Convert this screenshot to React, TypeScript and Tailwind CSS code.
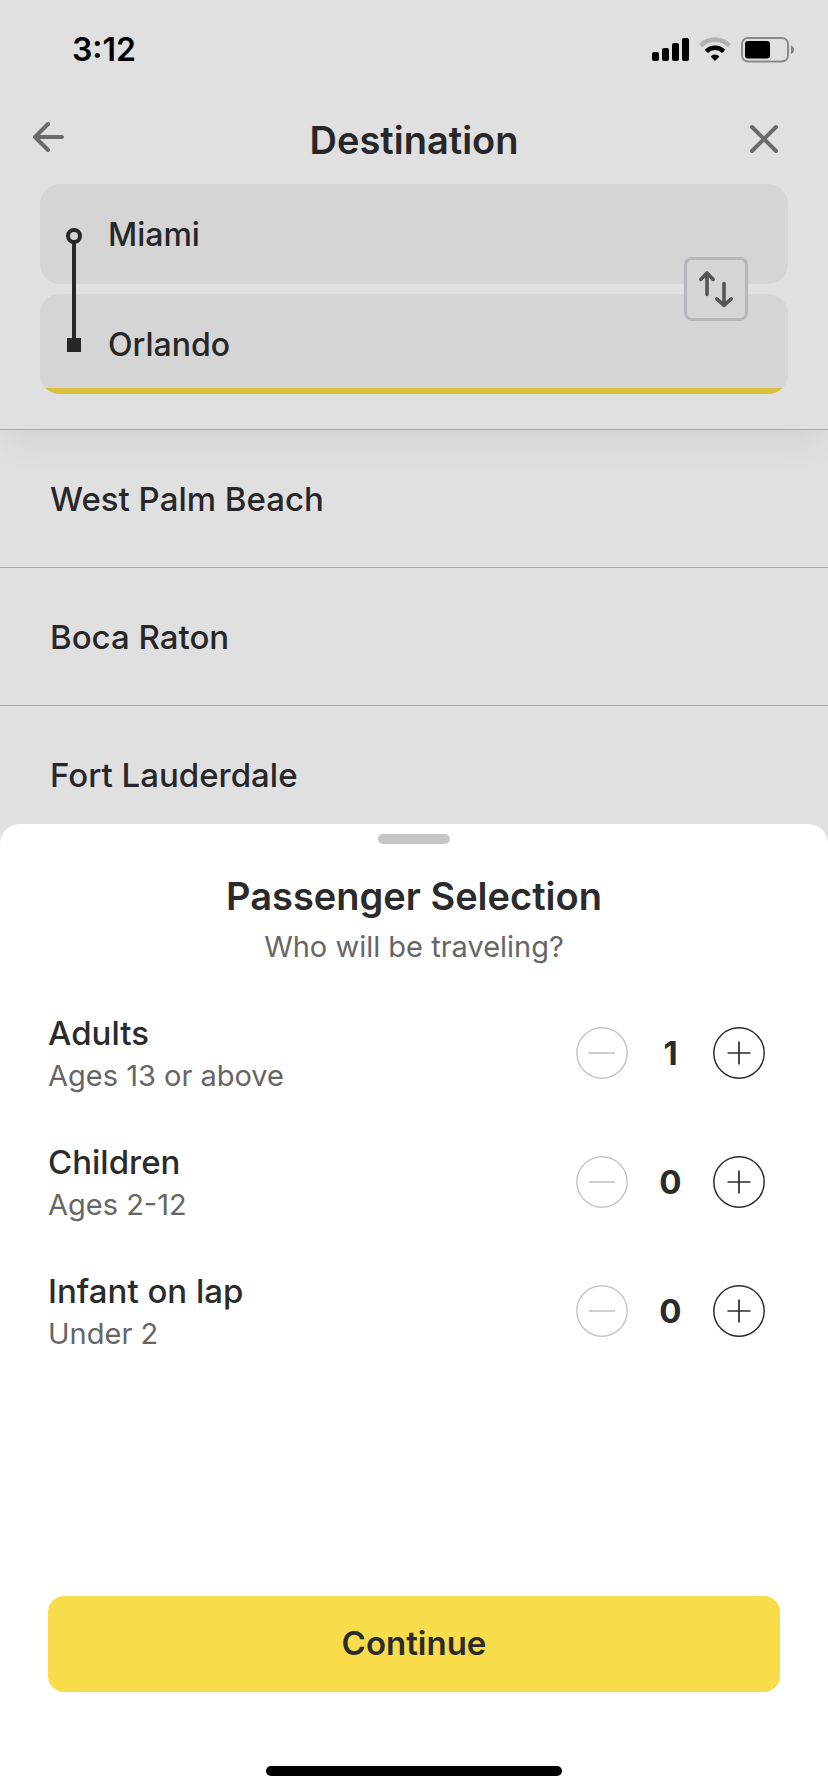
import { useState } from "react";

const CITIES = ["West Palm Beach", "Boca Raton", "Fort Lauderdale"];

const PASSENGER_TYPES = [
  { id: "adults", label: "Adults", hint: "Ages 13 or above", min: 1 },
  { id: "children", label: "Children", hint: "Ages 2-12", min: 0 },
  { id: "infants", label: "Infant on lap", hint: "Under 2", min: 0 },
];

function StatusBar() {
  return (
    <div className="flex h-[100px] items-center justify-between pr-[34px] pl-[72px] text-black">
      <span className="text-[32px] font-semibold">3:12</span>
      <div className="flex items-center gap-[10px]">
        <svg width="37" height="26" viewBox="0 0 37 26" aria-hidden="true">
          <rect x="0" y="15" width="7" height="9" rx="2" />
          <rect x="10" y="11" width="7" height="13" rx="2" />
          <rect x="20" y="6" width="7" height="18" rx="2" />
          <rect x="30" y="1" width="7" height="23" rx="2" />
        </svg>
        <svg width="32" height="26" viewBox="0 0 32 26" fill="none" aria-hidden="true">
          <path d="M1.6 8.6a20.4 20.4 0 0 1 28.8 0" stroke="#b3b3b3" strokeWidth="4.6" />
          <path d="M7.3 14.3a12.3 12.3 0 0 1 17.4 0" stroke="#000" strokeWidth="4.6" />
          <path d="M16 24l-4.4-4.6a6.2 6.2 0 0 1 8.8 0z" fill="#000" />
        </svg>
        <svg width="53" height="26" viewBox="0 0 53 26" fill="none" aria-hidden="true">
          <rect x="1" y="1" width="46" height="23.5" rx="6" stroke="#8a8a8a" strokeWidth="2" />
          <rect x="4" y="4" width="25" height="17.5" rx="3" fill="#000" />
          <path d="M50 8.5c4 1.4 4 7 0 8.4z" fill="#7d7d7d" />
        </svg>
      </div>
    </div>
  );
}

function RouteForm() {
  const [from, setFrom] = useState("Miami");
  const [to, setTo] = useState("Orlando");

  const swap = () => {
    setFrom(to);
    setTo(from);
  };

  return (
    <div className="relative mx-10 flex flex-col gap-[10px]">
      <input
        aria-label="From"
        className="h-[100px] w-full rounded-[20px] bg-[#d5d5d5] pr-32 pl-[68px] text-[32px] font-medium outline-none"
        value={from}
        onChange={(e) => setFrom(e.target.value)}
      />
      {/* Wrapper clips the active underline to the rounded corners */}
      <div className="overflow-hidden rounded-[20px] bg-[#d5d5d5]">
        <input
          aria-label="To"
          className="block h-[100px] w-full border-b-[6px] border-[#dac23f] pt-[6px] pr-32 pl-[68px] text-[32px] font-medium outline-none"
          value={to}
          onChange={(e) => setTo(e.target.value)}
        />
      </div>

      {/* Origin → destination marker */}
      <svg
        className="pointer-events-none absolute top-11 left-[26px]"
        width="16"
        height="124"
        viewBox="0 0 16 124"
        fill="none"
        aria-hidden="true"
      >
        <circle cx="8" cy="8" r="6" stroke="#272729" strokeWidth="4" />
        <path d="M8 14v97" stroke="#272729" strokeWidth="4" />
        <path d="M1 110h14v14H1z" fill="#272729" />
      </svg>

      <button
        type="button"
        aria-label="Swap cities"
        onClick={swap}
        className="absolute top-1/2 right-10 flex size-16 -translate-y-1/2 items-center justify-center rounded-lg border-[3px] border-[#b6b6bb] bg-[#d5d5d5]"
      >
        <svg
          width="58"
          height="58"
          viewBox="0 0 58 58"
          fill="none"
          stroke="#565658"
          strokeWidth="3.6"
          strokeLinecap="round"
          strokeLinejoin="round"
          aria-hidden="true"
        >
          <path d="M20 34.5V13M13.8 19.4L20 13l6.2 6.4" />
          <path d="M37 23.5V45.4M29.8 38.8L37 45.4l7.2-6.6" />
        </svg>
      </button>
    </div>
  );
}

type PassengerRowProps = {
  label: string;
  hint: string;
  value: number;
  min: number;
  onChange: (next: number) => void;
};

function PassengerRow({ label, hint, value, min, onChange }: PassengerRowProps) {
  return (
    <li className="flex items-center justify-between">
      <div>
        <p className="text-[33px] leading-[46px] font-medium">{label}</p>
        <p className="text-[29px] leading-10 text-[#666]">{hint}</p>
      </div>
      <div className="flex items-center">
        <button
          type="button"
          aria-label={`Remove ${label}`}
          disabled={value <= min}
          onClick={() => onChange(value - 1)}
          className="text-[#2b2b2d] disabled:text-[#c6c6c6]"
        >
          <svg width="52" height="52" viewBox="0 0 52 52" fill="none" stroke="currentColor">
            <circle cx="26" cy="26" r="25.2" strokeWidth="1.5" />
            <path d="M13 26h26" strokeWidth="1.7" />
          </svg>
        </button>
        <output className="w-[85px] text-center text-[33px] leading-[46px] font-bold">{value}</output>
        <button
          type="button"
          aria-label={`Add ${label}`}
          onClick={() => onChange(value + 1)}
          className="text-[#2b2b2d]"
        >
          <svg width="52" height="52" viewBox="0 0 52 52" fill="none" stroke="currentColor">
            <circle cx="26" cy="26" r="25.2" strokeWidth="1.5" />
            <path d="M14.5 26h23M26 14.5v23" strokeWidth="1.7" />
          </svg>
        </button>
      </div>
    </li>
  );
}

function PassengerSheet() {
  const [counts, setCounts] = useState<Record<string, number>>({
    adults: 1,
    children: 0,
    infants: 0,
  });

  return (
    <section
      role="dialog"
      aria-labelledby="sheet-title"
      className="fixed inset-x-0 bottom-0 flex flex-col rounded-t-[20px] bg-white pt-[10px] pb-4 text-[#2b2b2d]"
    >
      <div className="h-[10px] w-[72px] self-center rounded-full bg-[#c5c5c5]" />
      <h2 id="sheet-title" className="mt-7 text-center text-[38px] leading-[48px] font-semibold">
        Passenger Selection
      </h2>
      <p className="text-center text-[29px] leading-[54px] text-[#666]">Who will be traveling?</p>

      <ul className="mt-9 flex flex-col gap-[43px] pr-[63px] pl-12">
        {PASSENGER_TYPES.map(({ id, label, hint, min }) => (
          <PassengerRow
            key={id}
            label={label}
            hint={hint}
            min={min}
            value={counts[id]}
            onChange={(next) => setCounts({ ...counts, [id]: next })}
          />
        ))}
      </ul>

      <button
        type="button"
        className="mx-12 mt-[242px] h-24 rounded-2xl bg-[#f8dc4a] text-[33px] font-semibold"
      >
        Continue
      </button>

      {/* Home indicator */}
      <div className="mt-[74px] h-[10px] w-[296px] self-center rounded-full bg-black" />
    </section>
  );
}

export default function App() {
  return (
    <main className="min-h-screen overflow-hidden bg-[#e0e0e0] font-[Inter,'Liberation_Sans',sans-serif] text-[#272729]">
      <div className="border-b border-[#a8a8a8] pb-[35px] shadow-[0_12px_36px_-4px_rgba(0,0,0,0.08)]">
        <StatusBar />
        <header className="mb-1 flex h-20 items-center justify-between px-8 text-[#6b6b6b]">
          <button type="button" aria-label="Back">
            <svg
              width="48"
              height="36"
              viewBox="0 0 48 36"
              fill="none"
              stroke="currentColor"
              strokeWidth="4"
              strokeLinecap="round"
              strokeLinejoin="round"
              aria-hidden="true"
            >
              <path d="M30 15H3M16 2L3 15l13 13" />
            </svg>
          </button>
          <h1 className="text-[38px] leading-[48px] font-semibold text-[#272729]">Destination</h1>
          <button type="button" aria-label="Close">
            <svg
              width="48"
              height="36"
              viewBox="0 0 48 36"
              fill="none"
              stroke="currentColor"
              strokeWidth="4"
              strokeLinecap="round"
              aria-hidden="true"
            >
              <path d="M4 5l24 24M28 5L4 29" />
            </svg>
          </button>
        </header>
        <RouteForm />
      </div>

      <ul>
        {CITIES.map((city) => (
          <li key={city} className="border-b border-[#a8a8a8]">
            <button
              type="button"
              className="h-[137px] w-full px-[50px] text-left text-[33px] leading-[44px] font-medium"
            >
              {city}
            </button>
          </li>
        ))}
      </ul>

      <PassengerSheet />
    </main>
  );
}
